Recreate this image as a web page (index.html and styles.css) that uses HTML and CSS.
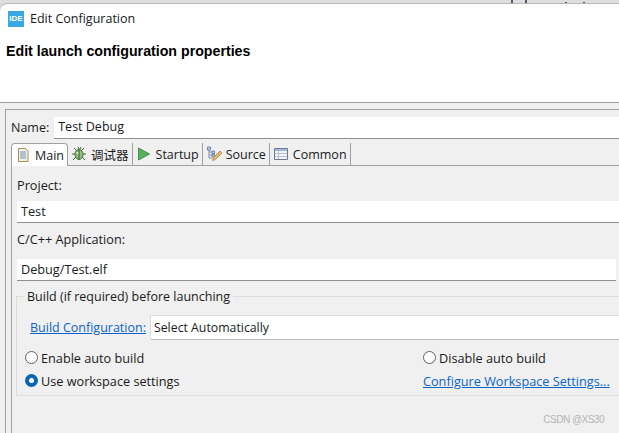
FILE: index.html
```html
<!DOCTYPE html>
<html lang="en">
<head>
    <meta charset="UTF-8">
    <title>Edit Configuration</title>
    <link rel="stylesheet" href="styles.css">
</head>
<body>
    <div class="desk-strip">
        <span class="desk-mark mark-a"></span>
        <span class="desk-mark mark-b"></span>
        <span class="desk-mark mark-c"></span>
        <span class="desk-mark mark-d"></span>
    </div>

    <div class="window">
        <div class="title-bar">
            <span class="ide-logo">IDE</span>
            <span>Edit Configuration</span>
        </div>
        <div class="banner">Edit launch configuration properties</div>

        <div class="content">
            <div class="frame">
                <div class="name-row">
                    <label class="name-label">Name:</label>
                    <div class="field name-field">Test Debug</div>
                </div>

                <div class="tabs">
                    <div class="tab active">
                        <svg width="16" height="16" viewBox="0 0 16 16"><path d="M3.500 1.500h7l2.500 2.500v10.500h-9.500z" fill="#f4f2e6" stroke="#a58f56"/><path d="M5 5h6M5 7h6M5 9h6M5 11h6" stroke="#6f8fc0"/></svg>
                        Main
                    </div>
                    <div class="tab">
                        <svg width="16" height="16" viewBox="0 0 16 16"><path d="M3 2l3 3M13 2l-3 3M1 8h3M12 8h3M2 14l3-3M14 14l-3-3M7 1l1 2M10 1l-1 2" stroke="#4a5a3a" fill="none"/><ellipse cx="8" cy="8.500" rx="4" ry="5" fill="#8fc27a" stroke="#3d6b3a"/><path d="M8 4v9" stroke="#2f5a33"/><circle cx="6.500" cy="7" r="1" fill="#e8f0d0"/></svg>
                        调试器
                    </div>
                    <div class="tab">
                        <svg width="16" height="16" viewBox="0 0 16 16"><path d="M2.500 2v12l11-6z" fill="#56b05c" stroke="#3c9150"/></svg>
                        Startup
                    </div>
                    <div class="tab">
                        <svg width="16" height="16" viewBox="0 0 16 16"><path d="M3 3v9h3M3 6h3M3 9h3" stroke="#7f8ca8" fill="none"/><path d="M1.500 1h3v3h-3zM6 5h2.500v2.500H6zM6 8.500h2.500V11H6z" fill="#c5d3ea" stroke="#54719f" stroke-width=".8"/><path d="M6.500 14.500l1-3 6.500-6.500 2 2-6.500 6.500z" fill="#e8b868" stroke="#a98448" stroke-width=".8"/></svg>
                        Source
                    </div>
                    <div class="tab">
                        <svg width="16" height="16" viewBox="0 0 16 16"><path d="M1.500 2.500h13v11h-13z" fill="#f3f3f5" stroke="#6c7a96"/><path d="M2 3h12v2H2z" fill="#a9b7d0"/><path d="M5.500 5v8M2 7.500h12M2 10.500h12" stroke="#b9c3d6"/></svg>
                        Common
                    </div>
                </div>

                <div class="tab-panel">
                    <div class="section-label project-label">Project:</div>
                    <div class="field">Test</div>
                    <div class="section-label app-label">C/C++ Application:</div>
                    <div class="field app-field">Debug/Test.elf</div>

                    <fieldset class="build-group">
                        <legend>Build (if required) before launching</legend>
                        <div class="config-row">
                            <a class="link config-link">Build Configuration:</a>
                            <div class="select">Select Automatically</div>
                        </div>
                        <div class="radio-row">
                            <div class="radio-col">
                                <div class="radio-item"><span class="radio"></span>Enable auto build</div>
                                <div class="radio-item"><span class="radio checked"></span>Use workspace settings</div>
                            </div>
                            <div class="radio-col right-col">
                                <div class="radio-item"><span class="radio"></span>Disable auto build</div>
                                <div class="radio-item"><a class="link">Configure Workspace Settings...</a></div>
                            </div>
                        </div>
                    </fieldset>
                </div>
            </div>
        </div>
    </div>

    <div class="watermark">CSDN @XS30</div>
</body>
</html>
```

FILE: styles.css
```css
html, body {
    margin: 0;
    padding: 0;
}
body {
    width: 619px;
    height: 433px;
    overflow: hidden;
    position: relative;
    background-color: #d9d9d9;
    color: #1a1a1a;
    font-family: "Open Sans", "Noto Sans CJK SC", sans-serif;
    font-size: 12.5px;
}
.desk-strip {
    height: 3px;
    background-color: #dedede;
    position: relative;
}
.desk-mark {
    position: absolute;
    top: 0;
    width: 2px;
    height: 3px;
    background-color: #54546a;
}
.mark-a { left: 511px; }
.mark-b { left: 525px; }
.mark-c { left: 565px; top: 2px; height: 1px; }
.mark-d { left: 583px; top: 2px; height: 1px; }
.window {
    border-top: 1px solid #b8b8b8;
    border-top-left-radius: 8px;
    background-color: #fff;
    overflow: hidden;
}
.title-bar {
    height: 29px;
    padding-left: 8px;
    display: flex;
    align-items: center;
    gap: 6px;
}
.ide-logo {
    width: 16px;
    height: 16px;
    background-color: #38a9e4;
    color: #fff;
    font-family: "Liberation Sans", sans-serif;
    font-size: 8px;
    font-weight: bold;
    line-height: 16px;
    text-align: center;
}
.banner {
    padding: 10px 0 0 6px;
    height: 59px;
    font-family: "Liberation Sans", sans-serif;
    font-size: 14.2px;
    font-weight: bold;
    color: #000;
    border-bottom: 1px solid #a0a0a0;
}
.content {
    background-color: #f0f0f0;
    height: 330px;
    padding: 6px 0 0 5px;
}
.frame {
    border-left: 1px solid #a0a0a0;
    border-top: 1px solid #a0a0a0;
    height: 330px;
    padding: 7px 0 0 5px;
}
.name-row {
    display: flex;
    align-items: center;
    gap: 5px;
}
.name-label {
    padding-bottom: 2px;
}
.field {
    background-color: #fff;
    border-bottom: 1px solid #8f8f8f;
    height: 21px;
    line-height: 20px;
    padding-left: 4px;
}
.name-field {
    flex: 1;
}
.tabs {
    display: flex;
    margin-top: 4px;
    height: 22px;
    border-bottom: 1px solid #a0a0a0;
}
.tab {
    display: flex;
    align-items: center;
    gap: 4px;
    padding: 0 3px 0 3px;
    border-right: 1px solid #a0a0a0;
    height: 22px;
    white-space: nowrap;
}
.tab.active {
    background-color: #fff;
    border: 1px solid #a0a0a0;
    border-bottom: 0;
    border-top-left-radius: 4px;
    border-top-right-radius: 4px;
    height: 23px;
    box-sizing: border-box;
    margin-bottom: -1px;
}
.tab-panel {
    border-left: 1px solid #a0a0a0;
    padding-left: 5px;
    height: 270px;
    font-size: 12.7px;
}
.section-label {
    line-height: 17px;
}
.project-label {
    padding-top: 11px;
    padding-bottom: 7px;
}
.app-label {
    padding-top: 8px;
    padding-bottom: 11px;
}
.app-field {
    margin-right: 3px;
}
.build-group {
    margin: 7px 0 0 -1px;
    padding: 0 0 0 13px;
    height: 106px;
    border: 1px solid #dcdcdc;
    border-right: 0;
}
.build-group legend {
    padding: 0 3px;
    margin-left: -6px;
    font-size: 12.5px;
}
.config-row {
    display: flex;
    align-items: center;
    gap: 4px;
    margin-top: 10px;
}
.link {
    color: #0a64c8;
    text-decoration: underline;
}
.config-link {
    font-size: 12.5px;
}
.select {
    flex: 1;
    height: 23px;
    line-height: 23px;
    font-size: 12.3px;
    background-color: #fff;
    border: 1px solid #dcdcdc;
    border-bottom-color: #bdbdbd;
    border-right: 0;
    border-radius: 2px 0 0 2px;
    padding-left: 3px;
}
.radio-row {
    display: flex;
    margin: 6px 0 0 -5px;
}
.radio-col {
    width: 398px;
}
.right-col {
    width: auto;
}
.radio-item {
    display: flex;
    align-items: center;
    gap: 3px;
    height: 23px;
    white-space: nowrap;
}
.radio {
    flex-shrink: 0;
    width: 11px;
    height: 11px;
    border: 1px solid #5f5f5f;
    border-radius: 50%;
    background-color: #fff;
}
.radio.checked {
    width: 5px;
    height: 5px;
    border: 4px solid #0a64b4;
}
.watermark {
    position: absolute;
    right: 15px;
    top: 414px;
    font-family: "Liberation Sans", sans-serif;
    font-size: 10px;
    letter-spacing: -0.5px;
    color: #b4b4b4;
}
```
